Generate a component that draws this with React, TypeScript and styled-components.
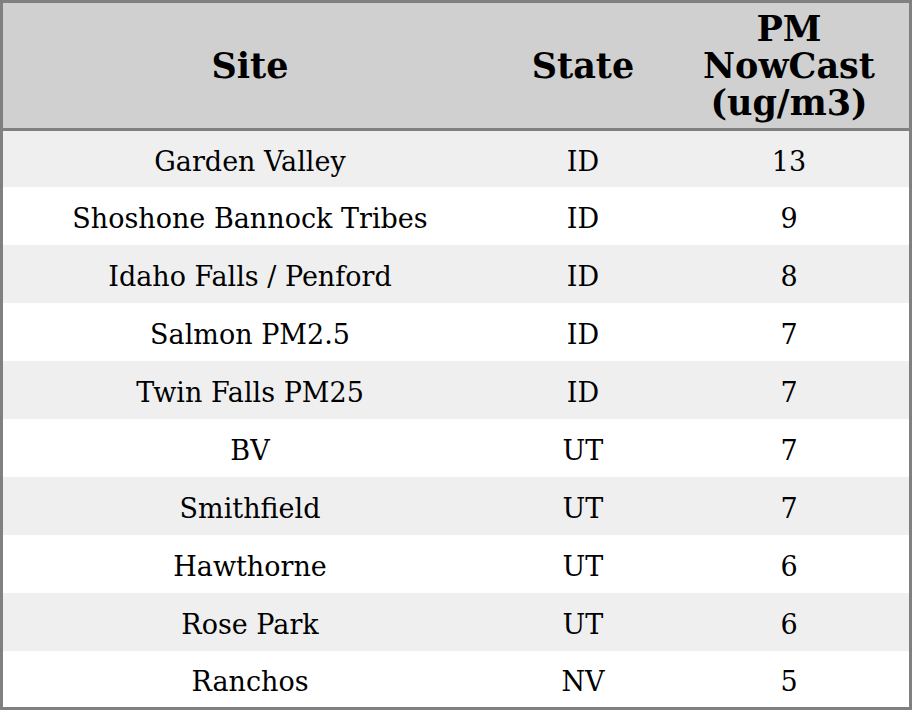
import React from "react";
import styled, { createGlobalStyle } from "styled-components";

const Global = createGlobalStyle`
  html, body { margin: 0; padding: 0; background: #ffffff; }
  body { font-family: "DejaVu Serif", "Liberation Serif", serif; }
`;

const Table = styled.table`
  width: 912px;
  box-sizing: border-box;
  border-collapse: separate;
  border-spacing: 0;
  border: 3px solid #808080;
  font-family: "DejaVu Serif", "Liberation Serif", serif;
  color: #000;
  table-layout: fixed;
`;

const HeadRow = styled.tr`
  background: #d0d0d0;
  height: 128px;
`;

const Th = styled.th<{ $w: number }>`
  width: ${(p) => p.$w}px;
  padding: 0;
  border-bottom: 3px solid #808080;
  font-size: 35px;
  font-weight: bold;
  text-align: center;
  vertical-align: middle;
  line-height: 37px;
`;

const Row = styled.tr<{ $alt: boolean; $h: number }>`
  background: ${(p) => (p.$alt ? "#efefef" : "#ffffff")};
  height: ${(p) => p.$h}px;
`;

const Td = styled.td`
  padding: 4px 0 0;
  font-size: 27px;
  text-align: center;
  vertical-align: middle;
`;

const rows: [string, string, number][] = [
  ["Garden Valley", "ID", 13],
  ["Shoshone Bannock Tribes", "ID", 9],
  ["Idaho Falls / Penford", "ID", 8],
  ["Salmon PM2.5", "ID", 7],
  ["Twin Falls PM25", "ID", 7],
  ["BV", "UT", 7],
  ["Smithfield", "UT", 7],
  ["Hawthorne", "UT", 6],
  ["Rose Park", "UT", 6],
  ["Ranchos", "NV", 5],
];

export default function App() {
  return (
    <>
      <Global />
      <Table>
        <thead>
          <HeadRow>
            <Th $w={494}>Site</Th>
            <Th $w={172}>State</Th>
            <Th $w={240}>
              PM
              <br />
              NowCast
              <br />
              (ug/m3)
            </Th>
          </HeadRow>
        </thead>
        <tbody>
          {rows.map(([site, st, v], i) => (
            <Row key={i} $alt={i % 2 === 0} $h={i === 0 || i === rows.length - 1 ? 56 : 58}>
              <Td>{site}</Td>
              <Td>{st}</Td>
              <Td>{v}</Td>
            </Row>
          ))}
        </tbody>
      </Table>
    </>
  );
}
